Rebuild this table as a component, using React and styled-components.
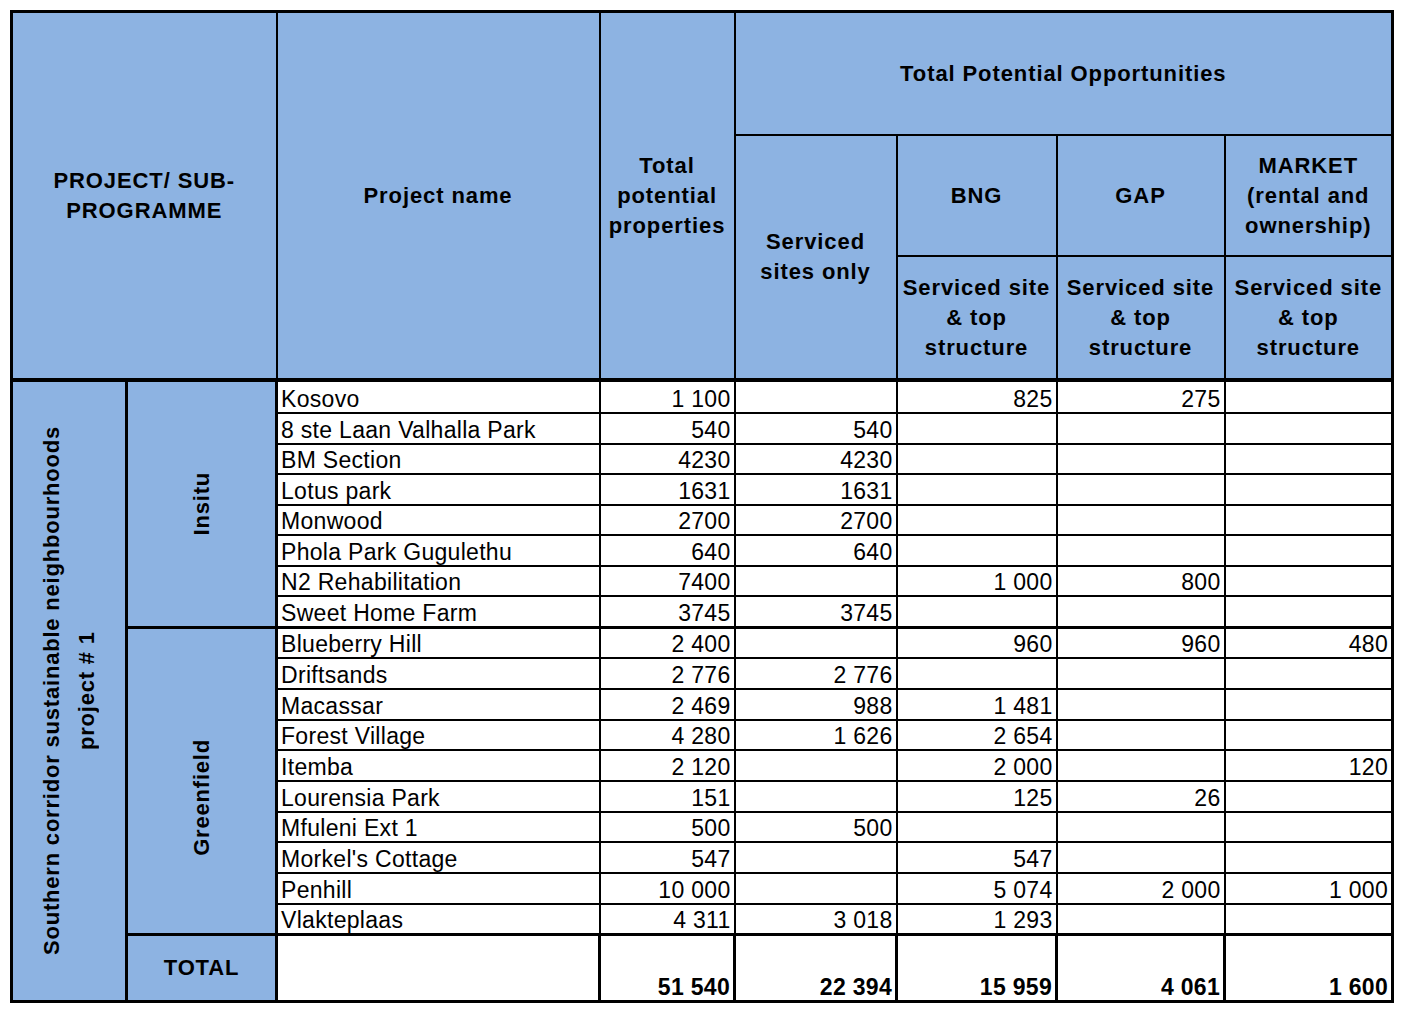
import React from 'react';
import styled, { createGlobalStyle } from 'styled-components';

const GlobalStyle = createGlobalStyle`
  body {
    margin: 0;
    background: #fff;
    font-family: "Liberation Sans", Arial, sans-serif;
  }
`;

const Page = styled.div`
  padding: 10px 0 0 10px;
`;

const Table = styled.table`
  border-collapse: collapse;
  table-layout: fixed;
  width: 1381px;
  border: 3px solid #000;
  color: #000;
`;

const HeadCell = styled.th`
  background: #8db3e2;
  border: 2px solid #000;
  font-size: 22px;
  font-weight: bold;
  line-height: 30px;
  letter-spacing: 0.9px;
  text-align: center;
  vertical-align: middle;
  padding: 0;
  white-space: nowrap;
  height: ${p => p.h || 'auto'};
  border-bottom-width: ${p => (p.thickBottom ? '4px' : '2px')};
`;

const SideCell = styled.td`
  background: #8db3e2;
  border: 3px solid #000;
  font-size: 22px;
  font-weight: bold;
  letter-spacing: 0.8px;
  text-align: center;
  vertical-align: middle;
  padding: ${p => p.pad || '0'};
`;

const Vertical = styled.div`
  writing-mode: vertical-rl;
  transform: rotate(180deg);
  margin: 0 auto;
  white-space: nowrap;
  line-height: ${p => p.lh || '30px'};
`;

const Row = styled.tr`
  height: ${p => p.h}px;
`;

const Cell = styled.td`
  border: 2px solid #000;
  border-top-width: ${p => (p.thickTop ? '3px' : '2px')};
  font-size: 23px;
  letter-spacing: 0.3px;
  line-height: 25px;
  padding: 0 3px 0 3px;
  text-align: ${p => (p.num ? 'right' : 'left')};
  vertical-align: bottom;
  white-space: nowrap;
  background: #fff;
`;

const TotalCell = styled.td`
  border: 3px solid #000;
  font-size: 23px;
  font-weight: bold;
  letter-spacing: 0.3px;
  line-height: 26px;
  padding: 0 3px 0 3px;
  text-align: right;
  vertical-align: bottom;
  background: #fff;
`;

const insitu = [
  ['Kosovo', '1 100', '', '825', '275', ''],
  ['8 ste Laan Valhalla Park', '540', '540', '', '', ''],
  ['BM Section', '4230', '4230', '', '', ''],
  ['Lotus park', '1631', '1631', '', '', ''],
  ['Monwood', '2700', '2700', '', '', ''],
  ['Phola Park Gugulethu', '640', '640', '', '', ''],
  ['N2 Rehabilitation', '7400', '', '1 000', '800', ''],
  ['Sweet Home Farm', '3745', '3745', '', '', ''],
];

const greenfield = [
  ['Blueberry Hill', '2 400', '', '960', '960', '480'],
  ['Driftsands', '2 776', '2 776', '', '', ''],
  ['Macassar', '2 469', '988', '1 481', '', ''],
  ['Forest Village', '4 280', '1 626', '2 654', '', ''],
  ['Itemba', '2 120', '', '2 000', '', '120'],
  ['Lourensia Park', '151', '', '125', '26', ''],
  ['Mfuleni Ext 1', '500', '500', '', '', ''],
  ["Morkel's Cottage", '547', '', '547', '', ''],
  ['Penhill', '10 000', '', '5 074', '2 000', '1 000'],
  ['Vlakteplaas', '4 311', '3 018', '1 293', '', ''],
];

const insituHeights = [33, 31, 30, 31, 30, 31, 30, 31];
const greenHeights = [31, 31, 31, 30, 31, 31, 30, 31, 31, 30];
const totals = ['51 540', '22 394', '15 959', '4 061', '1 600'];

const widths = [115, 150, 323, 135, 162, 160, 168, 168];

function DataCells({ row, thickTop }) {
  return row.map((v, i) => (
    <Cell key={i} num={i > 0} thickTop={thickTop}>
      {v}
    </Cell>
  ));
}

export default function App() {
  return (
    <Page>
      <GlobalStyle />
      <Table>
        <colgroup>
          {widths.map((w, i) => (
            <col key={i} style={{ width: w }} />
          ))}
        </colgroup>
        <thead>
          <tr>
            <HeadCell colSpan={2} rowSpan={3} h="121px" thickBottom>
              PROJECT/ SUB-
              <br />
              PROGRAMME
            </HeadCell>
            <HeadCell rowSpan={3} thickBottom>
              Project name
            </HeadCell>
            <HeadCell rowSpan={3} thickBottom>
              Total
              <br />
              potential
              <br />
              properties
            </HeadCell>
            <HeadCell colSpan={4} h="121px">
              Total Potential Opportunities
            </HeadCell>
          </tr>
          <tr>
            <HeadCell rowSpan={2} thickBottom>
              Serviced
              <br />
              sites only
            </HeadCell>
            <HeadCell h="119px">BNG</HeadCell>
            <HeadCell>GAP</HeadCell>
            <HeadCell>
              MARKET
              <br />
              (rental and
              <br />
              ownership)
            </HeadCell>
          </tr>
          <tr>
            <HeadCell h="121px" thickBottom>
              Serviced site
              <br />& top
              <br />
              structure
            </HeadCell>
            <HeadCell thickBottom>
              Serviced site
              <br />& top
              <br />
              structure
            </HeadCell>
            <HeadCell thickBottom>
              Serviced site
              <br />& top
              <br />
              structure
            </HeadCell>
          </tr>
        </thead>
        <tbody>
          {insitu.map((row, i) => (
            <Row key={row[0]} h={insituHeights[i]}>
              {i === 0 && (
                <>
                  <SideCell rowSpan={19}>
                    <Vertical lh="35px">
                      Southern corridor sustainable neighbourhoods
                      <br />
                      project # 1
                    </Vertical>
                  </SideCell>
                  <SideCell rowSpan={8}>
                    <Vertical>Insitu</Vertical>
                  </SideCell>
                </>
              )}
              <DataCells row={row} />
            </Row>
          ))}
          {greenfield.map((row, i) => (
            <Row key={row[0]} h={greenHeights[i]}>
              {i === 0 && (
                <SideCell rowSpan={10} pad="34px 0 0 0">
                  <Vertical>Greenfield</Vertical>
                </SideCell>
              )}
              <DataCells row={row} thickTop={i === 0} />
            </Row>
          ))}
          <Row h={67}>
            <SideCell>TOTAL</SideCell>
            <TotalCell />
            {totals.map(t => (
              <TotalCell key={t}>{t}</TotalCell>
            ))}
          </Row>
        </tbody>
      </Table>
    </Page>
  );
}
